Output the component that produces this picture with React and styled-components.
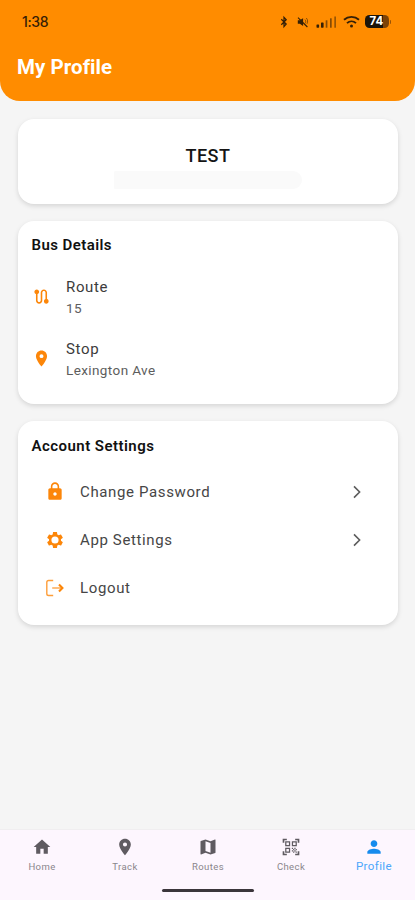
import React from "react";
import styled, { createGlobalStyle } from "styled-components";
import {
  MdHome,
  MdLocationOn,
  MdMap,
  MdQrCodeScanner,
  MdPerson,
  MdLock,
  MdRoute,
} from "react-icons/md";

const GlobalStyle = createGlobalStyle`
  *, *::before, *::after { box-sizing: border-box; }
  body {
    margin: 0;
    background: #f5f5f5;
    font-family: Roboto, "Liberation Sans", sans-serif;
  }
`;

const Screen = styled.div`
  display: flex;
  flex-direction: column;
  width: 415px;
  height: 900px;
  overflow: hidden;
  background: #f5f5f5;
`;

const Header = styled.header`
  height: 101px;
  flex: none;
  background: #ff8c00;
  border-radius: 0 0 20px 20px;
  color: #fff;
`;

const StatusBar = styled.div`
  display: flex;
  align-items: center;
  justify-content: space-between;
  height: 43px;
  padding: 0 24px 0 22px;
  color: #352006;
`;

const Clock = styled.span`
  font: 500 14px/20px Inter, sans-serif;
  letter-spacing: -0.4px;
`;

const StatusIcons = styled.div`
  display: flex;
  align-items: center;
`;

const StatusGlyph = styled.svg`
  display: block;
  width: ${(p) => p.$w}px;
  height: 14px;
  margin-right: ${(p) => p.$gap}px;
`;

const Battery = styled.span`
  display: flex;
  align-items: center;
  justify-content: center;
  width: 24px;
  height: 13px;
  padding-right: 1px;
  border-radius: 4.5px;
  background: linear-gradient(90deg, #1d1509 76%, #7d4307 76%);
  color: #fff;
  font: 700 11.5px/13px Inter, sans-serif;
`;

const BatteryTip = styled.span`
  width: 1.5px;
  height: 4px;
  margin-left: 0.5px;
  border-radius: 0 2px 2px 0;
  background: #9a5305;
`;

const Title = styled.h1`
  margin: 10px 0 0 17px;
  font-size: 20.5px;
  font-weight: 700;
  line-height: 28px;
  letter-spacing: 0.05px;
`;

const Content = styled.main`
  flex: 1;
  display: flex;
  flex-direction: column;
  gap: 17px;
  padding: 18px 17px 0 18px;
`;

const Card = styled.section`
  height: ${(p) => p.$height}px;
  padding: 13px 14px;
  border-radius: 16px;
  background: #fff;
  box-shadow: 0 2px 5px rgba(0, 0, 0, 0.13);
`;

const NameCard = styled(Card)`
  display: flex;
  flex-direction: column;
  align-items: center;
  padding: 25px 0 0;
`;

const Name = styled.div`
  font-size: 18px;
  font-weight: 500;
  line-height: 24px;
  letter-spacing: 0.5px;
  color: #151515;
`;

const Redaction = styled.div`
  width: 188px;
  height: 18px;
  margin-top: 3px;
  border-radius: 6px 40px 40px 6px;
  background: #fafafa;
`;

const CardTitle = styled.h2`
  margin: 0 0 0 -0.5px;
  font-size: 15px;
  font-weight: 600;
  line-height: 22px;
  letter-spacing: ${(p) => p.$tracking}px;
  color: #111;
`;

const Detail = styled.div`
  display: flex;
  align-items: center;
  height: 48px;
  margin-top: ${(p) => p.$top}px;
`;

const DetailIcon = styled.span`
  display: flex;
  justify-content: center;
  width: 19px;
  margin-right: 15px;
  color: #fc8609;
`;

const Label = styled.div`
  font-size: 15px;
  line-height: 22px;
  letter-spacing: 0.65px;
  color: #3c3c3c;
`;

const Value = styled.div`
  font-size: 13.5px;
  line-height: 20px;
  letter-spacing: 0.4px;
  color: #5d5d5d;
`;

const AccountCard = styled(Card)`
  padding-top: 14px;
`;

const Setting = styled.div`
  display: flex;
  align-items: center;
  height: 48px;
  padding: 0 23px 0 13px;
  &:first-of-type { margin-top: 11px; }
`;

const SettingIcon = styled.span`
  display: flex;
  justify-content: center;
  width: 20px;
  margin-right: 15px;
  color: #fc8609;
`;

const SettingLabel = styled.span`
  flex: 1;
  font-size: 15px;
  line-height: 22px;
  letter-spacing: 0.63px;
  color: #464646;
`;

const NavBar = styled.nav`
  flex: none;
  height: 71px;
  display: flex;
  flex-direction: column;
  align-items: center;
  background: #fdf6fe;
  border-top: 1px solid #f0eef0;
`;

const Tabs = styled.div`
  display: flex;
  width: 100%;
  height: 57px;
`;

const Tab = styled.div`
  flex: 1;
  display: flex;
  flex-direction: column;
  align-items: center;
  padding-top: 6.5px;
  padding-left: 1px;
  color: ${(p) => (p.$active ? "#168bed" : "#5f5b61")};
`;

const TabLabel = styled.span`
  margin-top: ${(p) => (p.$active ? 2.5 : 3.5)}px;
  font-size: ${(p) => (p.$active ? 11.5 : 9.5)}px;
  line-height: 14px;
  letter-spacing: 0.4px;
  color: ${(p) => (p.$active ? "#4ba6fb" : "#89858b")};
`;

const HomeIndicator = styled.div`
  width: 92px;
  height: 3px;
  margin-top: 2px;
  border-radius: 2px;
  background: #3b353b;
`;

function BluetoothGlyph() {
  return (
    <StatusGlyph $w={8} $gap={9} viewBox="0 0 8 14" fill="none" stroke="currentColor" strokeWidth="1.25">
      <path d="M1.3 4.3 6.2 9 4 11.6V2.4l2.2 2.4-4.9 4.9" />
    </StatusGlyph>
  );
}

function MuteGlyph() {
  return (
    <StatusGlyph $w={12} $gap={7} viewBox="0 0 12 14" fill="none" stroke="currentColor">
      <path d="M.8 5.3h2L6.1 3.3v7.6L2.8 8.8h-2z" fill="currentColor" stroke="none" />
      <path d="m1 2.6 9.4 9.4" strokeWidth="1.1" />
      <path d="M8 4.6c.9 1.1.9 2.6.3 3.7M9.3 3c1.6 1.8 1.6 4 .7 5.8" strokeWidth="0.9" opacity="0.65" />
    </StatusGlyph>
  );
}

function SignalGlyph() {
  return (
    <StatusGlyph $w={21} $gap={6} viewBox="0 0 21 14" fill="currentColor">
      <rect x="0.5" y="9.5" width="2.6" height="3.2" rx="0.6" />
      <rect x="5" y="7.5" width="2.6" height="5.2" rx="0.6" />
      <rect x="9.7" y="5.3" width="1.7" height="7.4" opacity="0.6" />
      <rect x="14" y="3.3" width="1.7" height="9.4" opacity="0.6" />
      <rect x="18.3" y="1.5" width="1.7" height="11.2" opacity="0.5" />
    </StatusGlyph>
  );
}

function WifiGlyph() {
  return (
    <StatusGlyph $w={17} $gap={5} viewBox="0 0 17 14" fill="none" stroke="currentColor" strokeWidth="1.9">
      <path d="M1 4.7C5.2.9 11.8.9 16 4.7M4 8.1c2.6-2.3 6.4-2.3 9 0" />
      <circle cx="8.5" cy="10.9" r="1.5" fill="currentColor" stroke="none" />
    </StatusGlyph>
  );
}

function GearIcon() {
  return (
    <svg width="20" height="20" viewBox="0 0 24 24" fill="currentColor" fillRule="evenodd">
      <path d="M19.14 12.94c.04-.3.06-.61.06-.94 0-.32-.02-.64-.07-.94l2.03-1.58c.18-.14.23-.41.12-.61l-1.92-3.32c-.12-.22-.37-.29-.59-.22l-2.39.96c-.5-.38-1.03-.7-1.62-.94l-.36-2.54c-.04-.24-.24-.41-.48-.41h-3.84c-.24 0-.43.17-.47.41l-.36 2.54c-.59.24-1.13.57-1.62.94l-2.39-.96c-.22-.08-.47 0-.59.22L2.74 8.87c-.12.21-.08.47.12.61l2.03 1.58c-.05.3-.09.63-.09.94s.02.64.07.94l-2.03 1.58c-.18.14-.23.41-.12.61l1.92 3.32c.12.22.37.29.59.22l2.39-.96c.5.38 1.03.7 1.62.94l.36 2.54c.05.24.24.41.48.41h3.84c.24 0 .44-.17.47-.41l.36-2.54c.59-.24 1.13-.56 1.62-.94l2.39.96c.22.08.47 0 .59-.22l1.92-3.32c.12-.22.07-.47-.12-.61zM12 7.7a4.3 4.3 0 1 0 0 8.6 4.3 4.3 0 0 0 0-8.6z" />
    </svg>
  );
}

function LogoutIcon() {
  return (
    <svg width="18" height="18" viewBox="0 0 18 18" fill="none" stroke="currentColor">
      <path d="M7.2 1.5H2.6C1.4 1.5.8 2.1.8 3.3v11.4c0 1.2.6 1.8 1.8 1.8h4.6" strokeWidth="1.4" opacity="0.8" />
      <path d="M6.2 9h10" strokeWidth="1.4" opacity="0.75" />
      <path d="m13 5.6 3.4 3.4-3.4 3.4" strokeWidth="2.1" />
    </svg>
  );
}

function Chevron() {
  return (
    <svg width="8" height="14" viewBox="0 0 8 14" fill="none" stroke="#5c5c5c" strokeWidth="1.6">
      <path d="m1 1.4 5.6 5.6L1 12.6" />
    </svg>
  );
}

const settings = [
  { label: "Change Password", icon: <MdLock size={21} />, link: true },
  { label: "App Settings", icon: <GearIcon />, link: true },
  { label: "Logout", icon: <LogoutIcon />, link: false },
];

const tabs = [
  { label: "Home", Icon: MdHome },
  { label: "Track", Icon: MdLocationOn },
  { label: "Routes", Icon: MdMap },
  { label: "Check", Icon: MdQrCodeScanner },
  { label: "Profile", Icon: MdPerson, active: true },
];

export default function App() {
  return (
    <Screen>
      <GlobalStyle />
      <Header>
        <StatusBar>
          <Clock>1:38</Clock>
          <StatusIcons>
            <BluetoothGlyph />
            <MuteGlyph />
            <SignalGlyph />
            <WifiGlyph />
            <Battery>74</Battery>
            <BatteryTip />
          </StatusIcons>
        </StatusBar>
        <Title>My Profile</Title>
      </Header>
      <Content>
        <NameCard $height={84.5}>
          <Name>TEST</Name>
          <Redaction />
        </NameCard>
        <Card $height={183}>
          <CardTitle $tracking={0.42}>Bus Details</CardTitle>
          <Detail $top={17}>
            <DetailIcon><MdRoute size={21} /></DetailIcon>
            <div>
              <Label>Route</Label>
              <Value>15</Value>
            </div>
          </Detail>
          <Detail $top={14}>
            <DetailIcon><MdLocationOn size={21} /></DetailIcon>
            <div>
              <Label>Stop</Label>
              <Value>Lexington Ave</Value>
            </div>
          </Detail>
        </Card>
        <AccountCard $height={204}>
          <CardTitle $tracking={0.46}>Account Settings</CardTitle>
          {settings.map(({ label, icon, link }) => (
            <Setting key={label}>
              <SettingIcon>{icon}</SettingIcon>
              <SettingLabel>{label}</SettingLabel>
              {link && <Chevron />}
            </Setting>
          ))}
        </AccountCard>
      </Content>
      <NavBar>
        <Tabs>
          {tabs.map(({ label, Icon, active }) => (
            <Tab key={label} $active={active}>
              <Icon size={20} />
              <TabLabel $active={active}>{label}</TabLabel>
            </Tab>
          ))}
        </Tabs>
        <HomeIndicator />
      </NavBar>
    </Screen>
  );
}
